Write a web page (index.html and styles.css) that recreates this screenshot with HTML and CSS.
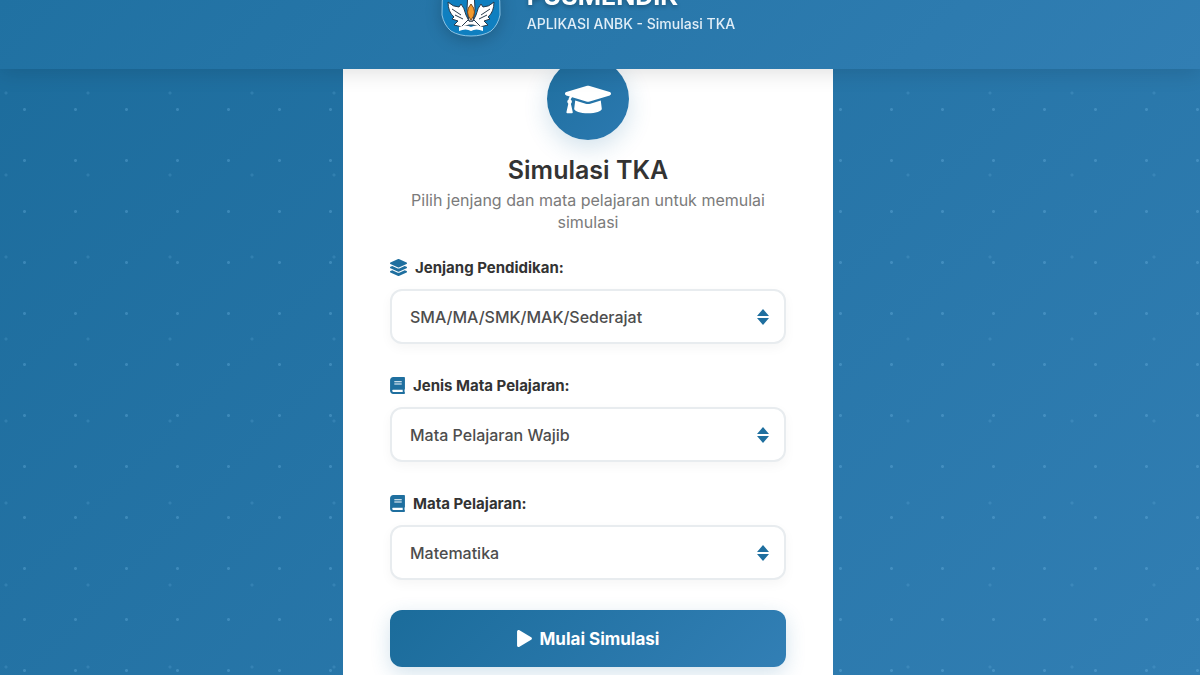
FILE: index.html
```
<!DOCTYPE html>
<html lang="id">

<head>
    <meta charset="UTF-8">
    <meta name="viewport" content="width=device-width, initial-scale=1.0">
    <title>Simulasi TKA</title>
    <link rel="stylesheet" href="styles.css">
</head>

<body>
    <header class="header">
        <svg class="logo" viewBox="0 0 60 66" aria-hidden="true">
            <path d="M30 1 L56 16 Q60 30 59 44 Q57 54 50 60 Q42 65 30 65 Q18 65 10 60 Q3 54 1 44 Q0 30 4 16 Z" fill="#0f7fc0" stroke="#8cc3e4" stroke-width="1" />
            <path d="M28 50 L25 44 Q23 36 20 33 L18 36 Q12 36 7 31 Q7 41 13 46 L11 48 L17 50 L13 54 L21 56 L28 54 H32 L39 56 L47 54 L43 50 L49 48 L47 46 Q53 41 53 31 Q48 36 42 36 L40 33 Q37 36 35 44 L32 50 Z" fill="#fff" stroke="#27394a" stroke-width="1" />
            <path d="M11 38 L20 44 M14 44 L22 48 M49 38 L40 44 M46 44 L38 48 M21 55 L27 49 M39 55 L33 49" fill="none" stroke="#27394a" stroke-width="1" />
            <path d="M27 20 H33 L34 38 L32 50 H28 L26 38 Z" fill="#fff" stroke="#27394a" />
            <path d="M30 33 Q37 41 30 49 Q23 41 30 33 Z" fill="#f39a2d" stroke="#7c491c" />
            <path d="M18 56 Q25 53 30 56 Q35 53 42 56 V60 Q35 57 30 60 Q25 57 18 60 Z" fill="#fff" />
        </svg>
        <div class="header-text">
            <h1>PUSMENDIK</h1>
            <p>APLIKASI ANBK - Simulasi TKA</p>
        </div>
    </header>

    <main class="main">
        <div class="card">
            <div class="card-icon">
                <svg viewBox="0 0 640 512" aria-hidden="true">
                    <path fill="currentColor" d="M622.34 153.2L343.4 67.5c-15.2-4.67-31.6-4.67-46.79 0L17.66 153.2c-23.54 7.23-23.54 38.36 0 45.59l48.63 14.94c-10.67 13.19-17.23 29.28-17.88 46.9C38.78 266.15 32 276.11 32 288c0 10.78 5.68 19.85 13.86 25.65L20.33 428.53C18.11 438.52 25.71 448 35.94 448h56.11c10.24 0 17.84-9.48 15.62-19.47L82.14 313.65C90.32 307.85 96 298.78 96 288c0-11.57-6.47-21.25-15.66-26.87.76-15.02 8.44-28.3 20.69-36.72L296.6 284.5c9.06 2.78 26.44 6.25 46.79 0l278.95-85.7c23.55-7.24 23.55-38.36 0-45.6zM352.79 315.09c-28.53 8.76-52.84 3.92-65.59 0l-145.02-44.55L128 384c0 35.35 85.96 64 192 64s192-28.65 192-64l-14.18-113.47-145.03 44.56z" />
                </svg>
            </div>
            <h2>Simulasi TKA</h2>
            <p class="subtitle">Pilih jenjang dan mata pelajaran untuk memulai simulasi</p>

            <form id="simulasi-form">
                <div class="form-group">
                    <label for="jenjang">
                        <svg class="icon-layers" viewBox="0 0 512 512" aria-hidden="true">
                            <path fill="currentColor" d="M12.41 148.02l232.94 105.67c6.8 3.09 14.49 3.09 21.29 0l232.94-105.67c16.55-7.51 16.55-32.52 0-40.03L266.65 2.31a25.607 25.607 0 0 0-21.29 0L12.41 107.98c-16.55 7.51-16.55 32.53 0 40.04zm487.18 88.28l-58.09-26.33-161.64 73.27c-7.56 3.43-15.59 5.17-23.86 5.17s-16.29-1.74-23.86-5.17L70.51 209.97l-58.1 26.33c-16.55 7.5-16.55 32.5 0 40l232.94 105.59c6.8 3.08 14.49 3.08 21.29 0L499.59 276.3c16.55-7.5 16.55-32.5 0-40zm0 127.8l-57.87-26.23-161.86 73.37c-7.56 3.43-15.59 5.17-23.86 5.17s-16.29-1.74-23.86-5.17L70.29 337.87 12.41 364.1c-16.55 7.5-16.55 32.5 0 40l232.94 105.59c6.8 3.08 14.49 3.08 21.29 0L499.59 404.1c16.55-7.5 16.55-32.5 0-40z" />
                        </svg>
                        Jenjang Pendidikan:
                    </label>
                    <select id="jenjang" name="jenjang">
                        <option>SMA/MA/SMK/MAK/Sederajat</option>
                    </select>
                </div>

                <div class="form-group">
                    <label for="jenis">
                        <svg class="icon-book" viewBox="0 0 448 512" aria-hidden="true">
                            <path fill="currentColor" d="M448 360V24c0-13.3-10.7-24-24-24H96C43 0 0 43 0 96v320c0 53 43 96 96 96h328c13.3 0 24-10.7 24-24v-16c0-7.5-3.5-14.3-8.9-18.7-4.2-15.4-4.2-59.3 0-74.7 5.4-4.3 8.9-11.1 8.9-18.6zM128 134c0-3.3 2.7-6 6-6h212c3.3 0 6 2.7 6 6v20c0 3.3-2.7 6-6 6H134c-3.3 0-6-2.7-6-6v-20zm0 64c0-3.3 2.7-6 6-6h212c3.3 0 6 2.7 6 6v20c0 3.3-2.7 6-6 6H134c-3.3 0-6-2.7-6-6v-20zm253.4 250H96c-17.7 0-32-14.3-32-32 0-17.6 14.4-32 32-32h285.4c-1.9 17.1-1.9 46.9 0 64z" />
                        </svg>
                        Jenis Mata Pelajaran:
                    </label>
                    <select id="jenis" name="jenis">
                        <option>Mata Pelajaran Wajib</option>
                    </select>
                </div>

                <div class="form-group">
                    <label for="mapel">
                        <svg class="icon-book" viewBox="0 0 448 512" aria-hidden="true">
                            <path fill="currentColor" d="M448 360V24c0-13.3-10.7-24-24-24H96C43 0 0 43 0 96v320c0 53 43 96 96 96h328c13.3 0 24-10.7 24-24v-16c0-7.5-3.5-14.3-8.9-18.7-4.2-15.4-4.2-59.3 0-74.7 5.4-4.3 8.9-11.1 8.9-18.6zM128 134c0-3.3 2.7-6 6-6h212c3.3 0 6 2.7 6 6v20c0 3.3-2.7 6-6 6H134c-3.3 0-6-2.7-6-6v-20zm0 64c0-3.3 2.7-6 6-6h212c3.3 0 6 2.7 6 6v20c0 3.3-2.7 6-6 6H134c-3.3 0-6-2.7-6-6v-20zm253.4 250H96c-17.7 0-32-14.3-32-32 0-17.6 14.4-32 32-32h285.4c-1.9 17.1-1.9 46.9 0 64z" />
                        </svg>
                        Mata Pelajaran:
                    </label>
                    <select id="mapel" name="mapel">
                        <option>Matematika</option>
                    </select>
                </div>

                <button type="submit">
                    <svg class="icon-play" viewBox="0 0 448 512" aria-hidden="true">
                        <path fill="currentColor" d="M424.4 214.7L72.4 6.6C43.8-10.3 0 6.1 0 47.9V464c0 37.5 40.7 60.1 72.4 41.3l352-208c31.4-18.5 31.5-64.1 0-82.6z" />
                    </svg>
                    Mulai Simulasi
                </button>
            </form>
        </div>
    </main>
</body>

</html>
```
FILE: styles.css
```
* {
    box-sizing: border-box;
    margin: 0;
    padding: 0;
}

body {
    font-family: Inter, "Open Sans", sans-serif;
    min-height: 100vh;
    color: #333;
    /* two dot grids over the blue gradient */
    background:
        radial-gradient(circle, rgba(120, 190, 235, 0.3) 1px, transparent 2px) -1px -18px / 51px 51px,
        radial-gradient(circle, rgba(120, 190, 235, 0.18) 1px, transparent 2px) 47px 52px / 82px 82px,
        linear-gradient(135deg, #1c6c9c, #317eb3) fixed;
}

.header {
    position: fixed;
    top: 0;
    left: 0;
    right: 0;
    z-index: 10;
    display: flex;
    justify-content: center;
    align-items: flex-end;
    gap: 26px;
    height: 69px;
    padding: 0 24px 32px 0;
    background: linear-gradient(135deg, #2071a2, #317eb3);
    box-shadow: 0 4px 20px rgba(0, 0, 0, 0.12);
    color: white;
}

.logo {
    width: 60px;
    height: 66px;
    filter: drop-shadow(0 4px 8px rgba(0, 0, 0, 0.2));
}

.header-text h1 {
    font-size: 25px;
    font-weight: 700;
    line-height: 30px;
    text-shadow: 0 2px 4px rgba(0, 0, 0, 0.3);
}

.header-text p {
    font-size: 14px;
    font-weight: 500;
    line-height: 26px;
    color: #e1eef7;
}

.main {
    display: flex;
    justify-content: center;
    padding-right: 24px;
}

.card {
    width: 100%;
    max-width: 490px;
    min-height: 100vh;
    padding: 58px 47px 8px;
    background-color: white;
    text-align: center;
}

.card-icon {
    display: flex;
    justify-content: center;
    align-items: center;
    width: 82px;
    height: 82px;
    margin: 0 auto 12px;
    border-radius: 50%;
    background: linear-gradient(135deg, #1f6f9f, #2b79b0);
    box-shadow: 0 8px 25px rgba(31, 111, 159, 0.2);
    color: white;
}

.card-icon svg {
    width: 46px;
    height: 37px;
}

h2 {
    font-size: 25px;
    font-weight: 600;
    line-height: 37px;
}

.subtitle {
    padding: 0 16px;
    font-size: 16px;
    line-height: 22px;
    color: #7b7b7b;
}

form {
    margin-top: 23px;
    text-align: left;
}

.form-group {
    margin-bottom: 30px;
}

label {
    display: flex;
    align-items: center;
    gap: 8px;
    margin-bottom: 10px;
    font-size: 15px;
    font-weight: 700;
    line-height: 23px;
}

label svg {
    height: 17px;
    color: #1f6f9f;
}

.icon-layers {
    width: 17px;
}

.icon-book {
    width: 15px;
}

select {
    width: 100%;
    height: 55px;
    padding: 0 18px;
    border: 2px solid #e8ecef;
    border-radius: 12px;
    appearance: none;
    background: white url("data:image/svg+xml,%3Csvg xmlns='http://www.w3.org/2000/svg' viewBox='0 0 12 16'%3E%3Cpath fill='%231f6f9f' d='M6 0l6 7H0zM0 9h12l-6 7z'/%3E%3C/svg%3E") no-repeat right 15px center / 12px 16px;
    box-shadow: 0 4px 12px rgba(0, 0, 0, 0.04);
    color: #4d4d4d;
    font-family: inherit;
    font-size: 16px;
    font-weight: 500;
}

select:focus {
    border-color: #327fb5;
    outline: none;
}

button {
    display: flex;
    justify-content: center;
    align-items: center;
    gap: 8px;
    width: 100%;
    height: 57px;
    border: none;
    border-radius: 12px;
    background: linear-gradient(135deg, #1b6c9b, #327fb5);
    box-shadow: 0 6px 20px rgba(31, 111, 159, 0.2);
    color: white;
    cursor: pointer;
    font-family: inherit;
    font-size: 17px;
    font-weight: 700;
}

button:hover {
    background: #327fb5;
}

.icon-play {
    width: 15px;
    height: 17px;
}
```
